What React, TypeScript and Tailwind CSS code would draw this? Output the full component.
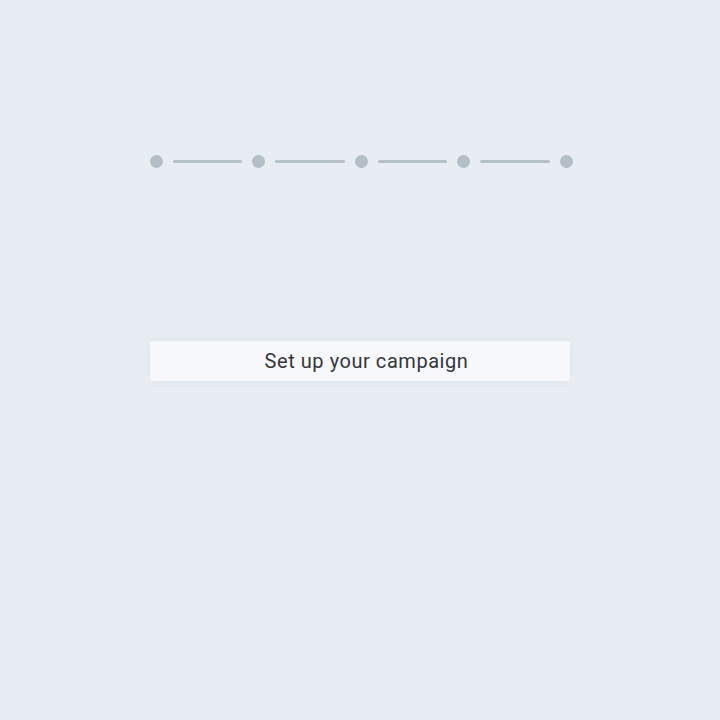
const steps = [0, 1, 2, 3, 4];

export default function App() {
  return (
    <div className="min-h-screen w-full bg-[#e8ecf3] flex flex-col items-center" style={{ fontFamily: 'Roboto, "Open Sans", sans-serif' }}>
      <div className="w-[423px] flex items-center mt-[155px] ml-[2px]">
        {steps.map((s) => (
          <div key={s} className={`flex items-center ${s < steps.length - 1 ? 'flex-1' : ''}`}>
            <div className="w-[13px] h-[13px] rounded-full bg-[#b4bec6] shrink-0" />
            {s < steps.length - 1 && <div className="flex-1 h-[3px] mx-[10px] rounded-full bg-[#b6c0c7]" />}
          </div>
        ))}
      </div>

      <div className="mt-[173px] w-[420px] h-[40px] bg-[#f7f8fb] rounded-[3px] shadow-[0_0_8px_rgba(0,0,0,0.05)] flex items-center justify-center pl-[13px]">
        <span className="text-[20px] text-[#35363a] tracking-[0.55px]">Set up your campaign</span>
      </div>
    </div>
  );
}
